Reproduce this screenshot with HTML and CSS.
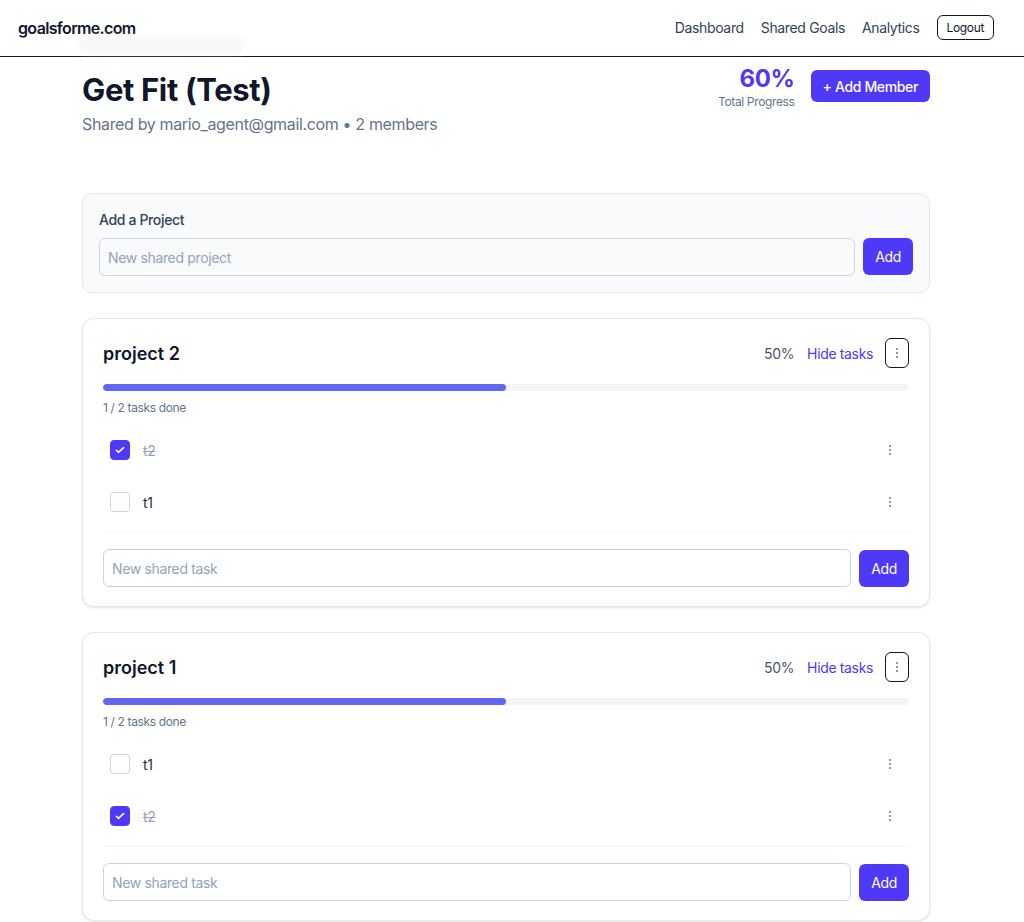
FILE: index.html
```html
<!DOCTYPE html>
<html>
<head>
<meta charset="utf-8">
<title>Get Fit (Test) - goalsforme.com</title>
<link rel="stylesheet" href="styles.css">
</head>
<body>
<nav class="nav">
  <div class="logo">goalsforme.com</div>
  <div class="nav-links">
    <a class="nav-link">Dashboard</a>
    <a class="nav-link">Shared Goals</a>
    <a class="nav-link">Analytics</a>
    <button class="logout">Logout</button>
  </div>
  <div class="ghost"></div>
</nav>

<main class="main">
  <header class="page-head">
    <div>
      <h1 class="title">Get Fit (Test)</h1>
      <p class="subtitle">Shared by mario_agent@gmail.com • 2 members</p>
    </div>
    <div class="head-right">
      <div class="total">
        <div class="total-pct">60%</div>
        <div class="total-label">Total Progress</div>
      </div>
      <button class="btn btn-member">+ Add Member</button>
    </div>
  </header>

  <section class="add-project">
    <label class="add-label">Add a Project</label>
    <div class="input-row">
      <input class="field field-muted" placeholder="New shared project">
      <button class="btn btn-add">Add</button>
    </div>
  </section>

  <section class="card">
    <div class="card-head">
      <h2 class="card-title">project 2</h2>
      <div class="card-actions">
        <span class="pct">50%</span>
        <a class="toggle">Hide tasks</a>
        <button class="kebab-btn"><span class="dots"><i></i><i></i><i></i></span></button>
      </div>
    </div>
    <div class="bar"><div class="bar-fill" style="width:50%"></div></div>
    <div class="done-count">1 / 2 tasks done</div>
    <ul class="tasks">
      <li class="task">
        <span class="check checked"><svg viewBox="0 0 20 20" width="12" height="12"><path d="M4 10.5l3.5 3.5L16 6" fill="none" stroke="#fff" stroke-width="2.6" stroke-linecap="round" stroke-linejoin="round"/></svg></span>
        <span class="task-text done">t2</span>
        <span class="dots row-dots"><i></i><i></i><i></i></span>
      </li>
      <li class="task">
        <span class="check"></span>
        <span class="task-text">t1</span>
        <span class="dots row-dots"><i></i><i></i><i></i></span>
      </li>
    </ul>
    <div class="input-row task-input">
      <input class="field" placeholder="New shared task">
      <button class="btn btn-add">Add</button>
    </div>
  </section>

  <section class="card">
    <div class="card-head">
      <h2 class="card-title">project 1</h2>
      <div class="card-actions">
        <span class="pct">50%</span>
        <a class="toggle">Hide tasks</a>
        <button class="kebab-btn"><span class="dots"><i></i><i></i><i></i></span></button>
      </div>
    </div>
    <div class="bar"><div class="bar-fill" style="width:50%"></div></div>
    <div class="done-count">1 / 2 tasks done</div>
    <ul class="tasks">
      <li class="task">
        <span class="check"></span>
        <span class="task-text">t1</span>
        <span class="dots row-dots"><i></i><i></i><i></i></span>
      </li>
      <li class="task">
        <span class="check checked"><svg viewBox="0 0 20 20" width="12" height="12"><path d="M4 10.5l3.5 3.5L16 6" fill="none" stroke="#fff" stroke-width="2.6" stroke-linecap="round" stroke-linejoin="round"/></svg></span>
        <span class="task-text done">t2</span>
        <span class="dots row-dots"><i></i><i></i><i></i></span>
      </li>
    </ul>
    <div class="input-row task-input">
      <input class="field" placeholder="New shared task">
      <button class="btn btn-add">Add</button>
    </div>
  </section>
</main>
</body>
</html>
```

FILE: styles.css
```css
* { box-sizing: border-box; }
html, body { margin: 0; padding: 0; }
body {
  font-family: Inter, "Noto Sans", sans-serif;
  letter-spacing: -0.022em;
  color: #0f172a;
  background: #fff;
}

.nav {
  position: relative;
  height: 57px;
  border-bottom: 1px solid #0f172a;
  display: flex;
  align-items: center;
  justify-content: space-between;
  padding: 0 30px 0 18px;
}
.logo {
  font-size: 16px;
  font-weight: 600;
  letter-spacing: -0.04em;
  color: #0f172a;
}
.nav-links {
  display: flex;
  align-items: center;
  margin-top: -1px;
}
.nav-link {
  font-size: 14px;
  color: #334155;
  margin-right: 17px;
}
.logout {
  font-family: inherit;
  letter-spacing: inherit;
  font-size: 12px;
  color: #0f172a;
  background: #fff;
  border: 1px solid #0f172a;
  border-radius: 6px;
  height: 25px;
  padding: 0 9px;
}
.ghost {
  position: absolute;
  left: 78px;
  top: 36px;
  width: 166px;
  height: 18px;
  background: #f1f3f5;
  border-radius: 9px;
  filter: blur(3px);
  opacity: 0.6;
}

.main {
  width: 848px;
  margin-left: 82px;
  padding-bottom: 40px;
}

.page-head {
  display: flex;
  justify-content: space-between;
  align-items: flex-start;
  padding-top: 13px;
  height: 136px;
}
.title {
  margin: 0;
  font-size: 31px;
  line-height: 40px;
  font-weight: 700;
  color: #0f172a;
}
.subtitle {
  margin: 2px 0 0;
  font-size: 16px;
  line-height: 24px;
  color: #64748b;
}
.head-right {
  display: flex;
  align-items: flex-start;
  gap: 16px;
}
.total {
  text-align: right;
  margin-top: -6px;
}
.total-pct {
  font-size: 24px;
  line-height: 30px;
  font-weight: 700;
  color: #4f39f6;
}
.total-label {
  font-size: 12px;
  line-height: 16px;
  color: #64748b;
}
.btn {
  font-family: inherit;
  letter-spacing: inherit;
  border: none;
  background: #4f39f6;
  color: #fff;
  border-radius: 6px;
  cursor: pointer;
}
.btn-member {
  height: 32px;
  padding: 0 12px;
  font-size: 14px;
  font-weight: 500;
}

.add-project {
  background: #f8fafc;
  border: 1px solid #e2e8f0;
  border-radius: 10px;
  padding: 16px;
  margin-bottom: 25px;
}
.add-label {
  display: block;
  font-size: 14px;
  line-height: 20px;
  font-weight: 500;
  color: #334155;
  margin-bottom: 8px;
}
.input-row {
  display: flex;
  gap: 8px;
}
.field {
  flex: 1;
  height: 38px;
  border: 1px solid #cbd5e1;
  border-radius: 6px;
  padding: 0 8px;
  font-family: inherit;
  letter-spacing: inherit;
  font-size: 14px;
  color: #0f172a;
  background: #fff;
  outline: none;
}
.field-muted { background: #f8fafc; }
.field::placeholder { color: #94a3b8; }
.btn-add {
  width: 50px;
  height: 37px;
  font-size: 14px;
}

.card {
  background: #fff;
  border: 1px solid #e2e8f0;
  border-radius: 12px;
  box-shadow: 0 1px 3px rgba(15, 23, 42, 0.08), 0 1px 2px rgba(15, 23, 42, 0.04);
  padding: 19px 20px 19px;
  margin-bottom: 25px;
}
.card-head {
  display: flex;
  justify-content: space-between;
  align-items: center;
}
.card-title {
  margin: 0;
  font-size: 18px;
  font-weight: 600;
  letter-spacing: 0;
  color: #0f172a;
}
.card-actions {
  display: flex;
  align-items: center;
}
.pct {
  font-size: 14px;
  color: #475569;
  margin-right: 13px;
}
.toggle {
  font-size: 14px;
  color: #4f39f6;
  margin-right: 12px;
}
.kebab-btn {
  width: 24px;
  height: 30px;
  border: 1px solid #0f172a;
  border-radius: 6px;
  background: #fff;
  padding: 0;
  display: flex;
  align-items: center;
  justify-content: center;
}
.dots {
  display: flex;
  flex-direction: column;
  align-items: center;
  gap: 2px;
}
.dots i {
  display: block;
  width: 2px;
  height: 2px;
  border-radius: 1px;
  background: #64748b;
}

.bar {
  margin-top: 16px;
  height: 7px;
  background: #f1f5f9;
  border-radius: 4px;
  overflow: hidden;
}
.bar-fill {
  height: 100%;
  background: #6366f1;
  border-radius: 4px;
}
.done-count {
  margin-top: 9px;
  font-size: 12px;
  line-height: 16px;
  color: #64748b;
}

.tasks {
  list-style: none;
  margin: 8px 0 0;
  padding: 0 0 4px;
  border-bottom: 1px solid #f1f5f9;
}
.task {
  display: flex;
  align-items: center;
  height: 52px;
  padding: 0 18px 0 7px;
}
.check {
  width: 20px;
  height: 20px;
  border: 1px solid #cbd5e1;
  border-radius: 4px;
  background: #fff;
  display: flex;
  align-items: center;
  justify-content: center;
}
.check.checked {
  background: #4f39f6;
  border-color: #4f39f6;
}
.task-text {
  flex: 1;
  margin-left: 13px;
  font-size: 14px;
  color: #1e293b;
}
.task-text.done {
  color: #94a3b8;
  text-decoration: line-through;
}

.task-input {
  padding-top: 16px;
}
.task-input .btn-add { margin-top: 1px; }
```
